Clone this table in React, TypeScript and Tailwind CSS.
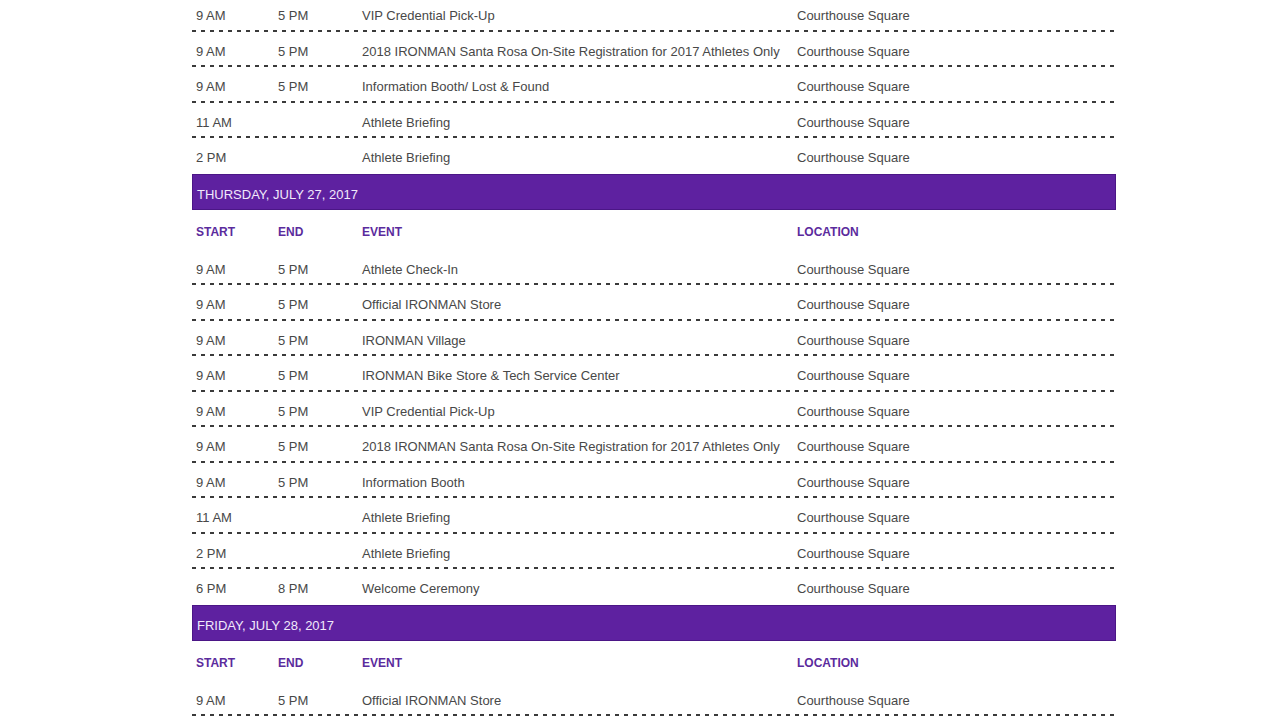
type Row = { start: string; end: string; event: string; location: string };

type Day = { title?: string; rows: Row[]; more?: boolean };

const loc = "Courthouse Square";

const days: Day[] = [
  {
    rows: [
      { start: "9 AM", end: "5 PM", event: "VIP Credential Pick-Up", location: loc },
      { start: "9 AM", end: "5 PM", event: "2018 IRONMAN Santa Rosa On-Site Registration for 2017 Athletes Only", location: loc },
      { start: "9 AM", end: "5 PM", event: "Information Booth/ Lost & Found", location: loc },
      { start: "11 AM", end: "", event: "Athlete Briefing", location: loc },
      { start: "2 PM", end: "", event: "Athlete Briefing", location: loc },
    ],
  },
  {
    title: "THURSDAY, JULY 27, 2017",
    rows: [
      { start: "9 AM", end: "5 PM", event: "Athlete Check-In", location: loc },
      { start: "9 AM", end: "5 PM", event: "Official IRONMAN Store", location: loc },
      { start: "9 AM", end: "5 PM", event: "IRONMAN Village", location: loc },
      { start: "9 AM", end: "5 PM", event: "IRONMAN Bike Store & Tech Service Center", location: loc },
      { start: "9 AM", end: "5 PM", event: "VIP Credential Pick-Up", location: loc },
      { start: "9 AM", end: "5 PM", event: "2018 IRONMAN Santa Rosa On-Site Registration for 2017 Athletes Only", location: loc },
      { start: "9 AM", end: "5 PM", event: "Information Booth", location: loc },
      { start: "11 AM", end: "", event: "Athlete Briefing", location: loc },
      { start: "2 PM", end: "", event: "Athlete Briefing", location: loc },
      { start: "6 PM", end: "8 PM", event: "Welcome Ceremony", location: loc },
    ],
  },
  {
    title: "FRIDAY, JULY 28, 2017",
    more: true,
    rows: [{ start: "9 AM", end: "5 PM", event: "Official IRONMAN Store", location: loc }],
  },
];

const Dots = () => (
  <div className="h-[2px] w-full bg-[repeating-linear-gradient(to_right,#3a3a3a_0_4px,transparent_4px_9px)]" />
);

const Cols = ({ r, head }: { r: Row; head?: boolean }) => (
  <div
    className={
      "flex items-center pl-[4px] " +
      (head
        ? "h-[40px] pt-[4px] text-[12px] font-bold text-[#5b2b9d]"
        : "h-[33.5px] pt-[6px] text-[13px] text-[#484848]")
    }
  >
    <span className="w-[82px] shrink-0">{r.start}</span>
    <span className="w-[84px] shrink-0">{r.end}</span>
    <span className="w-[435px] shrink-0 whitespace-nowrap">{r.event}</span>
    <span className="whitespace-nowrap">{r.location}</span>
  </div>
);

export default function App() {
  return (
    <div className="min-h-screen bg-white font-['Liberation_Sans',Arial,sans-serif]">
      <div className="ml-[192px] w-[924px] -mt-[4px]">
        {days.map((d, i) => (
          <div key={i}>
            {d.title && (
              <>
                <div className="flex h-[36px] items-center border border-[#4b1686] bg-[#5e21a0] pl-[4px] pt-[7px] text-[13px] text-[#f1e9fb]">
                  {d.title}
                </div>
                <Cols head r={{ start: "START", end: "END", event: "EVENT", location: "LOCATION" }} />
              </>
            )}
            {d.rows.map((r, j) => (
              <div key={j}>
                <Cols r={r} />
                {j < d.rows.length - 1 || d.more ? <Dots /> : <div className="h-[2px]" />}
              </div>
            ))}
          </div>
        ))}
      </div>
    </div>
  );
}
